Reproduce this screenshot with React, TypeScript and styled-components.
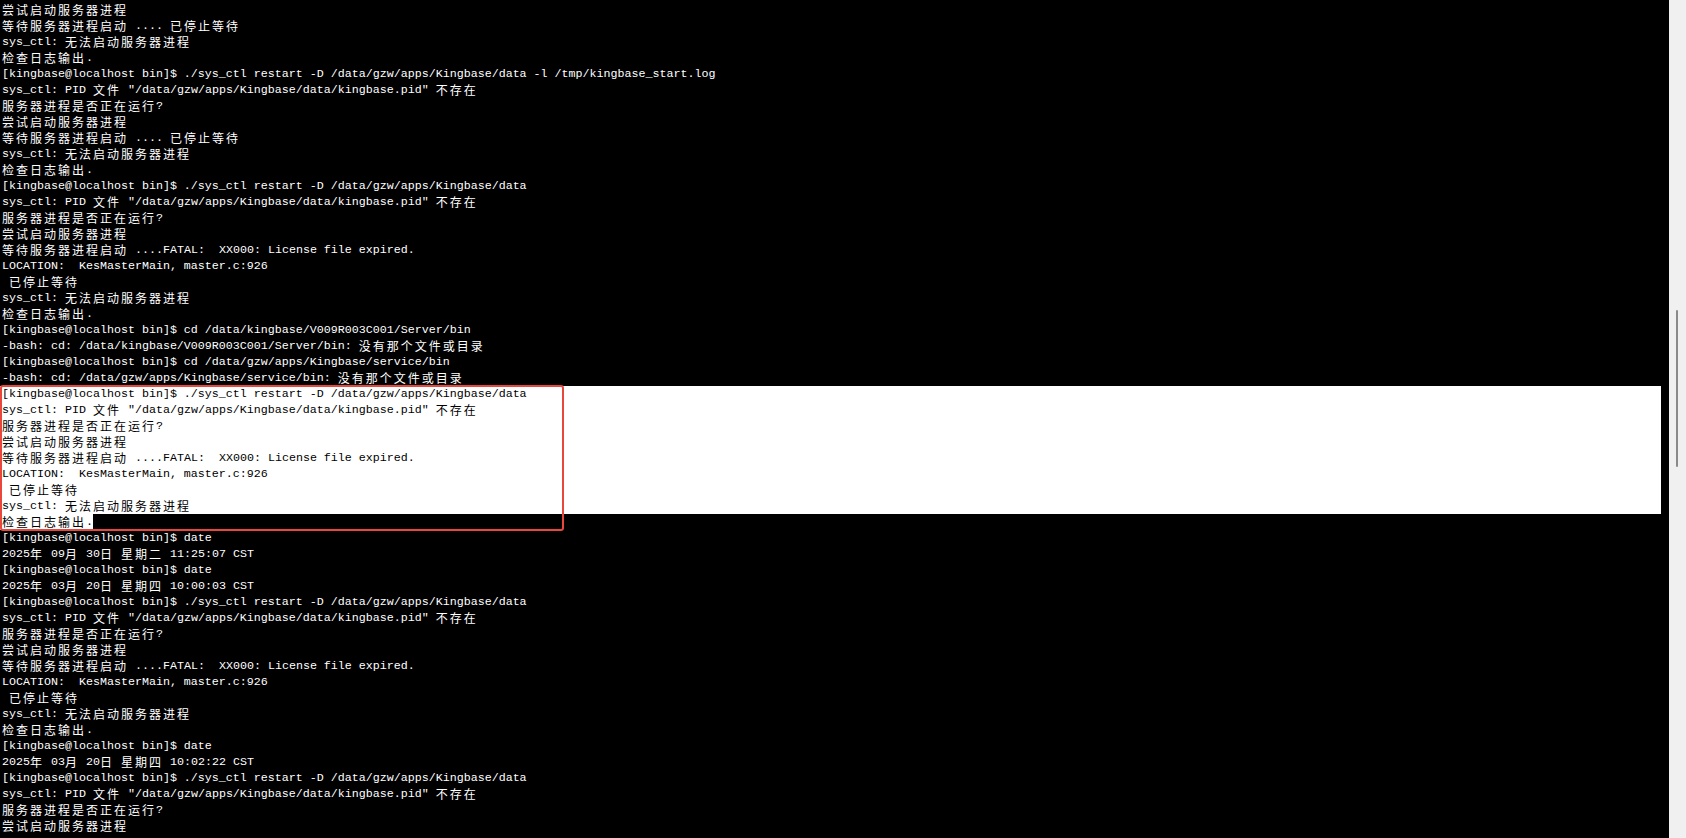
import React from 'react'
import styled, { createGlobalStyle } from 'styled-components'

type Sel = 'full' | 'partial' | undefined

const lines: string[] = [
  '尝试启动服务器进程',
  '等待服务器进程启动 .... 已停止等待',
  'sys_ctl: 无法启动服务器进程',
  '检查日志输出.',
  '[kingbase@localhost bin]$ ./sys_ctl restart -D /data/gzw/apps/Kingbase/data -l /tmp/kingbase_start.log',
  'sys_ctl: PID 文件 "/data/gzw/apps/Kingbase/data/kingbase.pid" 不存在',
  '服务器进程是否正在运行?',
  '尝试启动服务器进程',
  '等待服务器进程启动 .... 已停止等待',
  'sys_ctl: 无法启动服务器进程',
  '检查日志输出.',
  '[kingbase@localhost bin]$ ./sys_ctl restart -D /data/gzw/apps/Kingbase/data',
  'sys_ctl: PID 文件 "/data/gzw/apps/Kingbase/data/kingbase.pid" 不存在',
  '服务器进程是否正在运行?',
  '尝试启动服务器进程',
  '等待服务器进程启动 ....FATAL:  XX000: License file expired.',
  'LOCATION:  KesMasterMain, master.c:926',
  ' 已停止等待',
  'sys_ctl: 无法启动服务器进程',
  '检查日志输出.',
  '[kingbase@localhost bin]$ cd /data/kingbase/V009R003C001/Server/bin',
  '-bash: cd: /data/kingbase/V009R003C001/Server/bin: 没有那个文件或目录',
  '[kingbase@localhost bin]$ cd /data/gzw/apps/Kingbase/service/bin',
  '-bash: cd: /data/gzw/apps/Kingbase/service/bin: 没有那个文件或目录',
]

// the selected block (boxed in red)
const selected: string[] = [
  '[kingbase@localhost bin]$ ./sys_ctl restart -D /data/gzw/apps/Kingbase/data',
  'sys_ctl: PID 文件 "/data/gzw/apps/Kingbase/data/kingbase.pid" 不存在',
  '服务器进程是否正在运行?',
  '尝试启动服务器进程',
  '等待服务器进程启动 ....FATAL:  XX000: License file expired.',
  'LOCATION:  KesMasterMain, master.c:926',
  ' 已停止等待',
  'sys_ctl: 无法启动服务器进程',
]

const after: string[] = [
  '[kingbase@localhost bin]$ date',
  '2025年 09月 30日 星期二 11:25:07 CST',
  '[kingbase@localhost bin]$ date',
  '2025年 03月 20日 星期四 10:00:03 CST',
  '[kingbase@localhost bin]$ ./sys_ctl restart -D /data/gzw/apps/Kingbase/data',
  'sys_ctl: PID 文件 "/data/gzw/apps/Kingbase/data/kingbase.pid" 不存在',
  '服务器进程是否正在运行?',
  '尝试启动服务器进程',
  '等待服务器进程启动 ....FATAL:  XX000: License file expired.',
  'LOCATION:  KesMasterMain, master.c:926',
  ' 已停止等待',
  'sys_ctl: 无法启动服务器进程',
  '检查日志输出.',
  '[kingbase@localhost bin]$ date',
  '2025年 03月 20日 星期四 10:02:22 CST',
  '[kingbase@localhost bin]$ ./sys_ctl restart -D /data/gzw/apps/Kingbase/data',
  'sys_ctl: PID 文件 "/data/gzw/apps/Kingbase/data/kingbase.pid" 不存在',
  '服务器进程是否正在运行?',
  '尝试启动服务器进程',
]

// CJK glyphs take two terminal cells
function cells(text: string) {
  return text.split(/([\u2e80-\u9fff\u3000-\u303f\uff00-\uffef]+)/).map((part, i) =>
    i % 2 === 1 ? <Wide key={i}>{part}</Wide> : part
  )
}

const Row = ({ text, sel }: { text: string; sel?: Sel }) => (
  <Line $sel={sel}>
    {sel === 'partial' ? <Mark>{cells(text)}</Mark> : cells(text)}
  </Line>
)

const App = () => (
  <>
    <GlobalStyle />
    <Window>
      <Terminal>
        {lines.map((l, i) => (
          <Row key={'a' + i} text={l} />
        ))}
        <Boxed>
          {selected.map((l, i) => (
            <Row key={'s' + i} text={l} sel='full' />
          ))}
          <Row text='检查日志输出.' sel='partial' />
        </Boxed>
        {after.map((l, i) => (
          <Row key={'b' + i} text={l} />
        ))}
      </Terminal>
      <ScrollTrack>
        <Thumb />
      </ScrollTrack>
    </Window>
  </>
)

const GlobalStyle = createGlobalStyle`
  html, body {
    margin: 0;
    padding: 0;
    background: #000;
    overflow: hidden;
  }
`
const Window = styled.div`
  display: flex;
  width: 1686px;
  height: 838px;
  background: #000;
`
const Terminal = styled.div`
  flex: 1;
  padding-top: 2px;
  overflow: hidden;
  font-family: 'Liberation Mono', 'Courier New', monospace;
  font-size: 11.667px;
  color: #fff;
`
const Line = styled.div<{ $sel?: Sel }>`
  height: 16px;
  line-height: 16px;
  width: 1659px;
  padding-left: 2px;
  white-space: pre;
  background: ${(p) => (p.$sel === 'full' ? '#fff' : 'transparent')};
  color: ${(p) => (p.$sel === 'full' ? '#000' : '#fff')};
`
const Mark = styled.span`
  background: #fff;
  color: #000;
  display: inline-block;
  vertical-align: top;
  height: 16px;
  margin-left: -2px;
  padding-left: 2px;
`
const Wide = styled.span`
  display: inline-block;
  vertical-align: top;
  height: 16px;
  font-family: 'Noto Sans CJK SC', sans-serif;
  font-size: 12px;
  letter-spacing: 2px;
  line-height: 16px;
`
const Boxed = styled.div`
  position: relative;

  &::after {
    content: '';
    position: absolute;
    top: -1px;
    left: 0;
    width: 560px;
    bottom: -1px;
    border: 2.5px solid #e9463c;
    border-radius: 3px;
    pointer-events: none;
  }
`
const ScrollTrack = styled.div`
  width: 17px;
  height: 100%;
  background: #f0f0f0;
  display: flex;
  flex-direction: column;
  padding-top: 310px;
  box-sizing: border-box;
`
const Thumb = styled.div`
  width: 2px;
  height: 157px;
  margin-left: 7px;
  background: #8a8a8a;
  border-radius: 1px;
`

export default App
